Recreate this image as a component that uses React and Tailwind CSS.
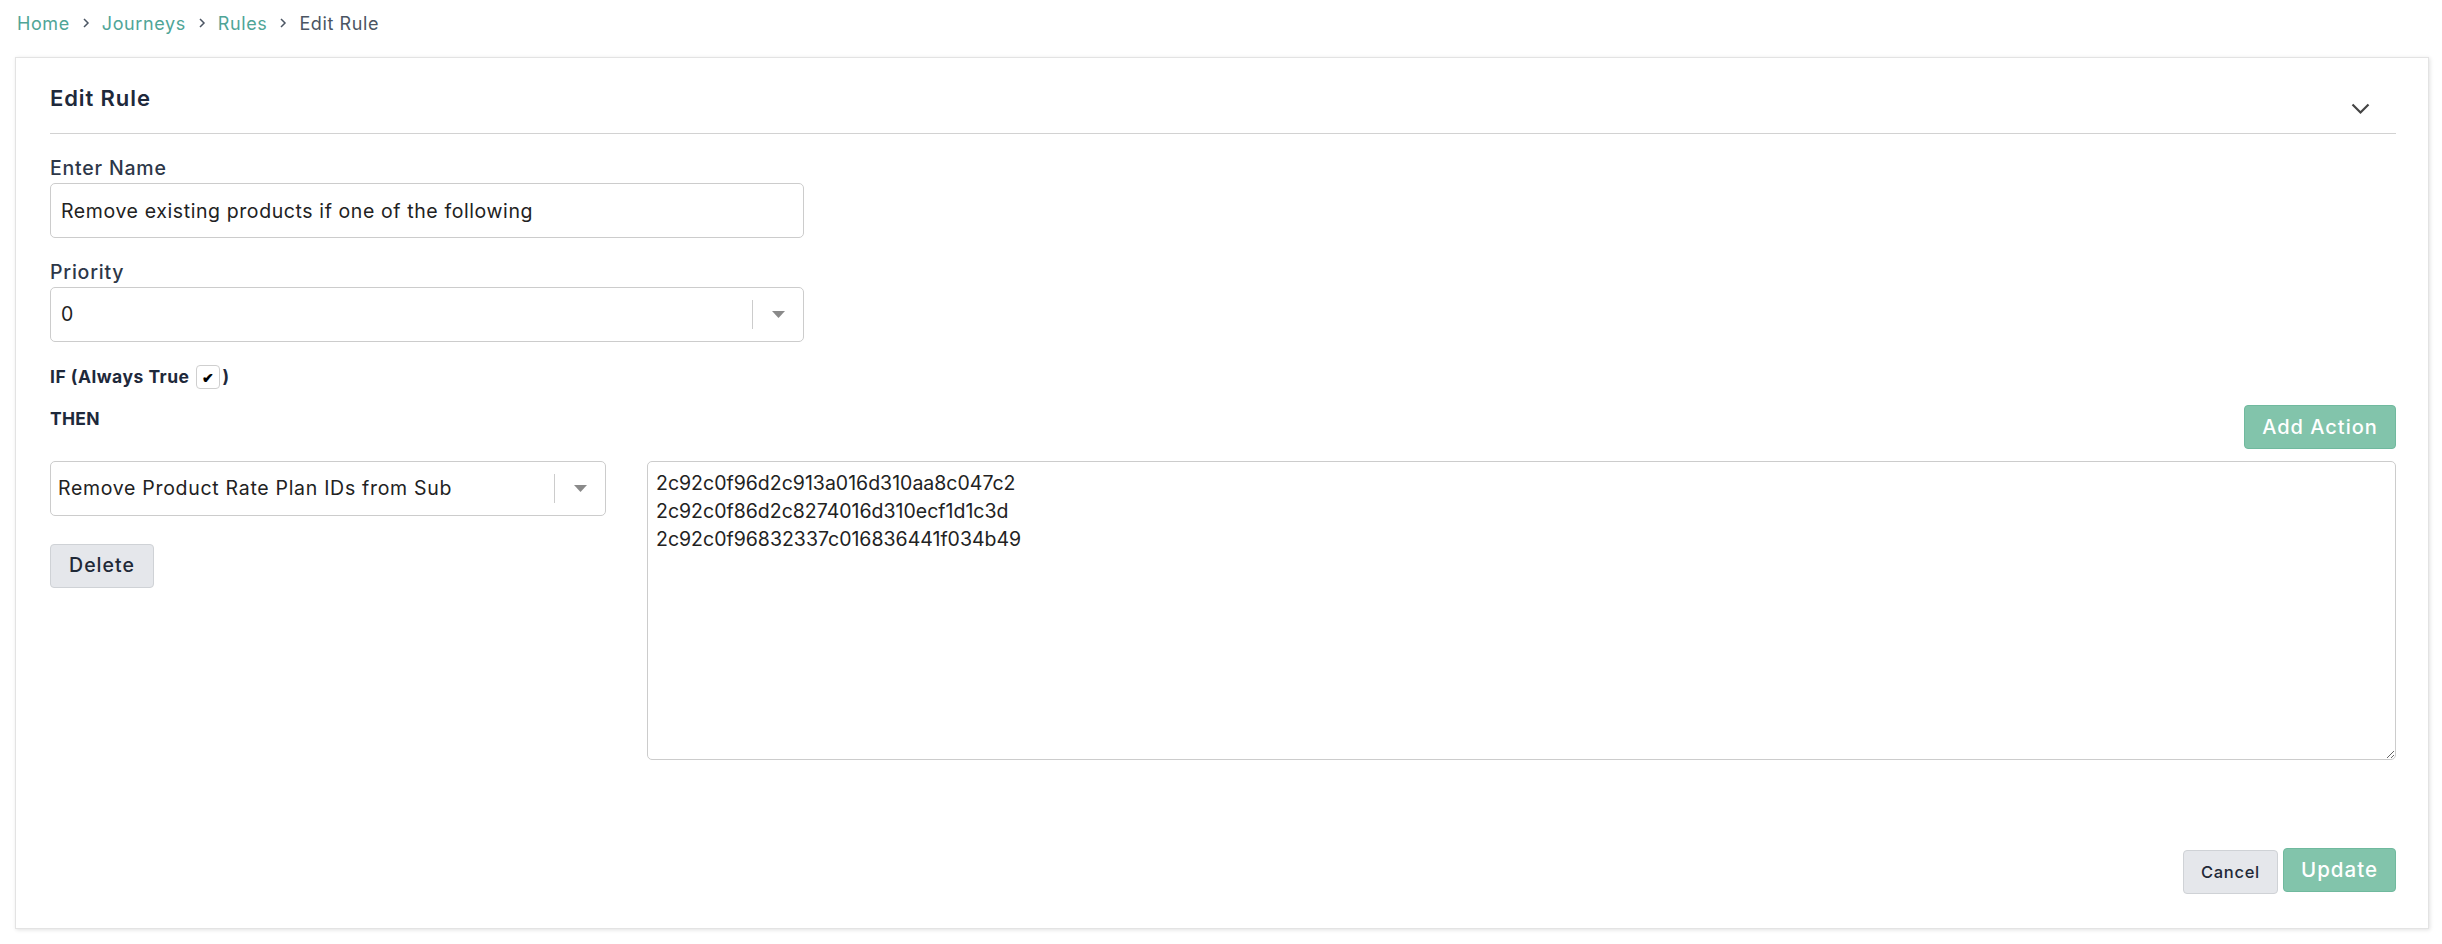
import React from 'react'

const LINK = 'text-[#4fa597]'

const Crumb = ({ children, last }) => (
  <>
    <span className={last ? 'text-[#4b5563]' : LINK}>{children}</span>
    {!last && (
      <svg width="8" height="12" viewBox="0 0 8 12" className="mx-[12px]" fill="none">
        <path d="M2 2l4 4-4 4" stroke="#4b5563" strokeWidth="1.5" />
      </svg>
    )}
  </>
)

const SelectBox = ({ value, textClass }) => (
  <div className="flex items-center h-[55px] border border-[#cccccc] rounded-[5px] bg-white">
    <div className={`flex-1 truncate ${textClass}`}>{value}</div>
    <div className="w-px h-[29px] bg-[#cccccc]" />
    <div className="w-[50px] flex justify-center">
      <svg width="13" height="7" viewBox="0 0 13 7">
        <path d="M0 0h13L6.5 7z" fill="#8a8a8a" />
      </svg>
    </div>
  </div>
)

export default function App() {
  return (
    <div className="min-h-screen bg-white font-['Inter',sans-serif] text-[#1f2937]">
      {/* breadcrumb */}
      <nav className="flex items-center h-[46px] pl-[17px] text-[18px] tracking-[0.6px]">
        <Crumb>Home</Crumb>
        <Crumb>Journeys</Crumb>
        <Crumb>Rules</Crumb>
        <Crumb last>Edit Rule</Crumb>
      </nav>

      <div className="mt-[11px] ml-[15px] mr-[13px] bg-white border border-[#e3e3e3] shadow-[1px_1px_4px_rgba(0,0,0,0.12)] pl-[34px] pr-[32px] pb-[34px]">
        {/* header */}
        <div className="flex justify-between h-[76px] border-b border-[#d2d2d2]">
          <h2 className="pt-[26px] leading-[28px] text-[22px] tracking-[0.9px] font-semibold text-[#1e293b]">Edit Rule</h2>
          <svg width="19" height="12" viewBox="0 0 19 12" className="mt-[45px] mr-[26px]" fill="none">
            <path d="M1.5 1.5l8 8 8-8" stroke="#444" strokeWidth="2.2" />
          </svg>
        </div>

        {/* name */}
        <div className="mt-[22px]">
          <label className="block leading-[24px] text-[19.5px] tracking-[0.8px] font-medium text-[#2d3748] mb-[3px]">Enter Name</label>
          <input
            type="text"
            defaultValue="Remove existing products if one of the following"
            className="w-[754px] h-[55px] border border-[#cccccc] rounded-[5px] px-[10px] text-[19.5px] tracking-[0.6px] text-[#222] outline-none"
          />
        </div>

        {/* priority */}
        <div className="mt-[22px] w-[754px]">
          <label className="block leading-[24px] text-[19.5px] tracking-[0.8px] font-medium text-[#2d3748] mb-[3px]">Priority</label>
          <SelectBox value="0" textClass="pl-[10px] text-[19.5px] text-[#222]" />
        </div>

        {/* if */}
        <div className="mt-[23px] flex items-center h-[24px] text-[17.5px] tracking-[0.5px] font-bold text-[#1e293b]">
          <span>IF (Always True</span>
          <span className="ml-[6px] w-[24px] h-[24px] flex items-center justify-center border border-[#cfcfcf] rounded-[4px] text-[14px] tracking-normal text-black">✔</span>
          <span className="ml-[3px]">)</span>
        </div>

        {/* then + add action */}
        <div className="mt-[16px] flex justify-between items-start">
          <span className="mt-[2px] leading-[24px] text-[17.5px] tracking-[0.3px] font-bold text-[#1e293b]">THEN</span>
          <button className="w-[152px] h-[44px] rounded-[4px] bg-[#82c4ab] border border-[#70b99e] text-white text-[20px] tracking-[1px] font-medium">
            Add Action
          </button>
        </div>

        {/* action row */}
        <div className="mt-[12px] flex gap-[41px] items-start">
          <div className="w-[556px] shrink-0">
            <SelectBox value="Remove Product Rate Plan IDs from Sub" textClass="pl-[7px] text-[19.5px] tracking-[0.7px] text-[#222]" />
            <button className="mt-[28px] w-[104px] h-[44px] rounded-[4px] bg-[#e5e7eb] border border-[#cfd2d6] text-[19.5px] tracking-[1px] font-medium text-[#1f2937]">
              Delete
            </button>
          </div>
          <textarea
            defaultValue={'2c92c0f96d2c913a016d310aa8c047c2\n2c92c0f86d2c8274016d310ecf1d1c3d\n2c92c0f96832337c016836441f034b49'}
            className="flex-1 h-[299px] border border-[#cccccc] rounded-[5px] px-[8px] pt-[7px] text-[19.5px] leading-[28px] text-[#222] outline-none"
          />
        </div>

        {/* footer */}
        <div className="mt-[88px] flex justify-end items-start gap-[5px]">
          <button className="mt-[2px] w-[95px] h-[44px] rounded-[4px] bg-[#e5e7eb] border border-[#cfd2d6] text-[16.5px] tracking-[0.7px] font-medium text-[#1f2937]">
            Cancel
          </button>
          <button className="w-[113px] h-[44px] rounded-[4px] bg-[#82c4ab] border border-[#70b99e] text-white text-[20.5px] tracking-[1px] font-medium">
            Update
          </button>
        </div>
      </div>
    </div>
  )
}
